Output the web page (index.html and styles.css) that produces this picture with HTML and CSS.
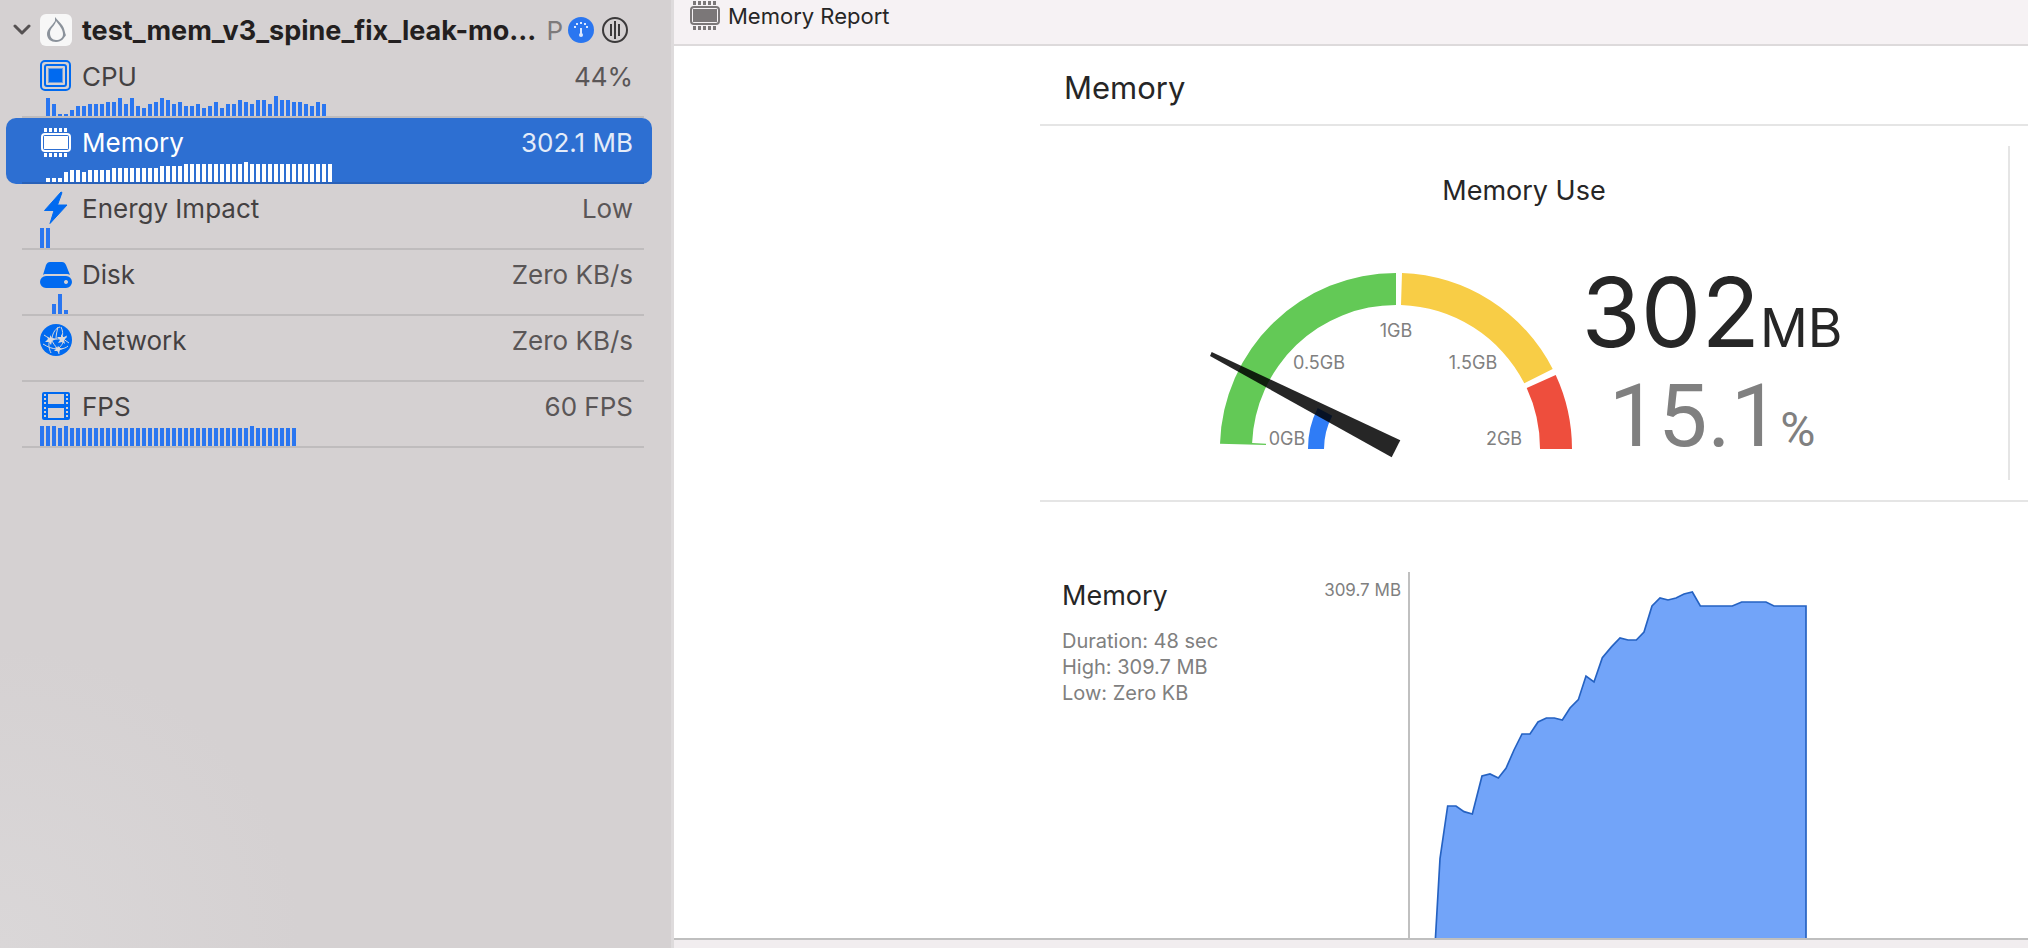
FILE: index.html
```html
<!DOCTYPE html>
<html lang="en">
<head>
<meta charset="utf-8">
<title>Memory Report</title>
<link rel="stylesheet" href="styles.css">
</head>
<body>
<svg class="defs" width="0" height="0" aria-hidden="true">
  <symbol id="chip" viewBox="0 0 32 32" overflow="visible">
    <rect x="2" y="6" width="28" height="17" rx="3" fill="none" stroke="currentColor" stroke-width="2"/>
    <rect x="4" y="8" width="24" height="13" fill="currentColor"/>
    <path d="M5.500 0v4M10.500 0v4M15.500 0v4M20.500 0v4M25.500 0v4M5.500 25v4M10.500 25v4M15.500 25v4M20.500 25v4M25.500 25v4" stroke="currentColor" stroke-width="3"/>
  </symbol>
</svg>
<div class="app">
  <aside class="sidebar">
    <header class="process">
      <button class="disclosure" aria-label="Collapse">
        <svg width="18" height="12" viewBox="0 0 18 12"><path d="M2 2l7 7 7-7" fill="none" stroke="#555152" stroke-width="3" stroke-linecap="round" stroke-linejoin="round"/></svg>
      </button>
      <svg class="app-icon" width="32" height="32" viewBox="0 0 32 32">
        <rect width="32" height="32" rx="6" fill="#f7f7f7"/>
        <path fill-rule="evenodd" d="M15 3L15 7C12 12 7 15 7 20c0 5 4 8 9 8 6 0 8-4 10-7-1-1-1-6-4-10C20 8 17 6 15 3zM16 7c3 4 7 8 7 13 0 4-3 6-7 6s-6-3-6-7c0-5 5-7 6-12z" fill="#8b929b"/>
      </svg>
      <h1 class="process-name">test_mem_v3_spine_fix_leak-mo...</h1>
      <span class="pid">P</span>
      <button class="round" aria-label="Gauges">
        <svg width="26" height="26" viewBox="0 0 26 26"><circle cx="13" cy="13" r="13" fill="#2a76f0"/><path d="M13 11v8" stroke="#dbe8ff" stroke-width="2"/><circle cx="13" cy="18" r="2" fill="#dbe8ff"/><path d="M6 10h2M8 7h2M12 6h2M16 7h2M18 10h2" stroke="#dbe8ff" stroke-width="2"/></svg>
      </button>
      <button class="round" aria-label="Threads">
        <svg width="26" height="26" viewBox="0 0 26 26"><circle cx="13" cy="13" r="12" fill="none" stroke="#3c3a3b" stroke-width="2"/><path d="M9 7v12M13 4v18M17 7v12" stroke="#3c3a3b" stroke-width="2"/></svg>
      </button>
    </header>
    <nav class="gauges">
      <button class="row"><span class="cell">
        <span class="line">
          <svg class="icon" viewBox="0 -1 32 32"><rect x="1" y="0" width="29" height="29" rx="4" fill="none" stroke="currentColor" stroke-width="2"/><rect x="5" y="4" width="21" height="21" rx="2" fill="none" stroke="currentColor" stroke-width="2"/><rect x="9" y="8" width="13" height="13" fill="currentColor"/><rect x="8.500" y="7.500" width="14" height="14" fill="none" stroke="currentColor" stroke-dasharray="1 1"/></svg>
          <span class="name">CPU</span><span class="value">44%</span>
        </span>
        <svg class="spark" width="300" height="20"><path d="M8 20v-18M14 20v-12M20 20v-2M26 20v-2M32 20v-6M38 20v-10M44 20v-10M50 20v-12M56 20v-12M62 20v-12M68 20v-14M74 20v-14M80 20v-18M86 20v-12M92 20v-18M98 20v-10M104 20v-8M110 20v-12M116 20v-14M122 20v-18M128 20v-16M134 20v-12M140 20v-14M146 20v-10M152 20v-10M158 20v-12M164 20v-8M170 20v-10M176 20v-14M182 20v-8M188 20v-12M194 20v-12M200 20v-16M206 20v-14M212 20v-12M218 20v-16M224 20v-16M230 20v-12M236 20v-20M242 20v-16M248 20v-16M254 20v-14M260 20v-14M266 20v-12M272 20v-10M278 20v-14M284 20v-12" stroke-width="4"/></svg>
      </span></button>
      <button class="row selected" aria-current="true"><span class="cell">
        <span class="line">
          <svg class="icon" viewBox="0 -2 32 32"><use href="#chip" width="32" height="32"/></svg>
          <span class="name">Memory</span><span class="value">302.1 MB</span>
        </span>
        <svg class="spark" width="300" height="20" stroke-dasharray="4 2"><path d="M6 18h16" stroke-width="4"/><path d="M24 15h4M42 15h4" stroke-width="10"/><path d="M30 14h10M48 14h22" stroke-width="12"/><path d="M72 13h46" stroke-width="14"/><path d="M120 12h22" stroke-width="16"/><path d="M144 11h148" stroke-width="18"/><path d="M204 10h4" stroke-width="20"/></svg>
      </span></button>
      <button class="row"><span class="cell">
        <span class="line">
          <svg class="icon" viewBox="0 -1 32 32"><path d="M21 -1L4.500 17.500H14L10 30.500L27 12H17.500L22 -.5z" fill="currentColor" stroke="currentColor" stroke-linejoin="round"/></svg>
          <span class="name">Energy Impact</span><span class="value">Low</span>
        </span>
        <svg class="spark" width="300" height="20" stroke-dasharray="4 2"><path d="M0 10h10" stroke-width="20"/></svg>
      </span></button>
      <button class="row"><span class="cell">
        <span class="line">
          <svg class="icon" viewBox="0 -1 32 32"><path d="M3 16L6 6c1-2 2-3 4-3h12c2 0 3 1 4 3l4 10c-1-.7-2-1-4-1H6c-2 0-2 .3-3 1z" fill="currentColor"/><path fill-rule="evenodd" d="M6 17h20a6 6 0 0 1 0 12H6a6 6 0 0 1 0-12zM26 21a2 2 0 1 0 .01 0z" fill="currentColor"/></svg>
          <span class="name">Disk</span><span class="value">Zero KB/s</span>
        </span>
        <svg class="spark" width="300" height="20"><path d="M14 20v-10M20 20v-20M26 20v-4" stroke-width="4"/></svg>
      </span></button>
      <button class="row"><span class="cell">
        <span class="line">
          <svg class="icon" viewBox="0 -1 32 32"><circle cx="16" cy="15" r="16" fill="currentColor"/><g fill="none" stroke="#dcd9da" stroke-width="1"><path d="M12 13C13 7 16 3 20 2M18 2c-1 4-2 8-2 12M21 2c2 4 2 7 1 12M4 10c3 2 6 4 8 4s8 1 15-3M3 19c5 3 9 5 15 5 5 0 8-1 10-3M10 14c-2 5-1 10 1 14M23 14c1 4-2 7-5 10M11 14c2 4 4 7 7 10M22 13l7 5M18 24l1 5"/></g><g fill="#dcd9da"><path d="M10 10l2 3 4 1-4 2-1 4-2-3-4 0 3-3-1-2 3 1zM21 9l2 3 4 0-3 3 1 4-3-2-4 1 2-3-3-3 4 0zM18 21l2 2 3 1-3 1-1 3-2-2-3 0 2-2-1-2 2 1z"/></g></svg>
          <span class="name">Network</span><span class="value">Zero KB/s</span>
        </span>
        <svg class="spark" width="300" height="20"></svg>
      </span></button>
      <button class="row"><span class="cell">
        <span class="line">
          <svg class="icon" viewBox="0 -1 32 32"><path fill-rule="evenodd" d="M4 1h24q2 0 2 2v24q0 2-2 2H4q-2 0-2-2V3q0-2 2-2zM8 3v10h16V3zM8 17v10h16V17zM4 3v2h2V3zM4 7v2h2V7zM4 11v2h2v-2zM4 16v2h2v-2zM4 20v2h2v-2zM4 24v2h2v-2zM26 3v2h2V3zM26 7v2h2V7zM26 11v2h2v-2zM26 16v2h2v-2zM26 20v2h2v-2zM26 24v2h2v-2z" fill="currentColor"/></svg>
          <span class="name">FPS</span><span class="value">60 FPS</span>
        </span>
        <svg class="spark" width="300" height="20" stroke-dasharray="4 2"><path d="M0 11h256" stroke-width="18"/><path d="M0 10h16M24 10h4M210 10h4" stroke-width="20"/></svg>
      </span></button>
    </nav>
  </aside>

  <main class="main">
    <div class="path-bar">
      <svg class="icon" viewBox="0 -1 32 32"><use href="#chip" width="32" height="32"/></svg>
      <span>Memory Report</span>
    </div>
    <div class="report">
      <h2 class="report-title">Memory</h2>
      <section class="overview">
        <div class="card">
          <h3 class="card-title">Memory Use</h3>
          <div class="usage">
            <svg class="dial" width="362" height="186" viewBox="-186 -177 362 186">
              <path fill="#63c956" d="M-176 -5.300A176 176 0 0 1 0 -176V-144A144 144 0 0 0 -143.900 -6L-130 -5.200V-4z"/>
              <path fill="#f8cd46" d="M6 -176A176 176 0 0 1 156.700 -80L128.300 -65.700A144 144 0 0 0 5 -144z"/>
              <path fill="#ee4e3d" d="M159.700 -74A176 176 0 0 1 176 0H144A144 144 0 0 0 130.700 -61z"/>
              <path fill="#2f7cf6" d="M-88 0A88 88 0 0 1 -78.300 -41L-63.700 -33.300A72 72 0 0 0 -72 0z"/>
              <g class="dial-labels">
                <text x="-109" y="-4">0GB</text>
                <text x="-77" y="-80">0.5GB</text>
                <text x="0" y="-112">1GB</text>
                <text x="77" y="-80">1.5GB</text>
                <text x="108" y="-4">2GB</text>
              </g>
              <path fill="#000" fill-opacity=".85" d="M-184.300 -97L-186 -93L-4.300 8.300L4.300 -8.700z"/>
            </svg>
            <div class="figures">
              <div class="amount">302<span class="unit">MB</span></div>
              <div class="percent">15.1<span class="unit">%</span></div>
            </div>
          </div>
        </div>
      </section>
      <section class="history">
        <div class="legend">
          <div>
            <h3 class="history-title">Memory</h3>
            <p class="details">Duration: 48 sec<br>High: 309.7 MB<br>Low: Zero KB</p>
          </div>
          <span class="axis-label">309.7 MB</span>
        </div>
        <div class="plot">
          <svg width="430" height="366" viewBox="-30 36 1290 1098">
            <path fill="#72a4f9" stroke="#2562c2" stroke-width="5" d="M46 1140L60 896L83 738H108L132 755L157 762L186 648L210 642L235 654L258 625L282 570L306 522H330L354 486L379 474H403L427 480L450 444L475 419L498 348L522 366L547 293L575 260L600 234L624 240H649L672 216L696 138L720 114L744 120L768 114L792 102L817 96L841 138H937L965 126H1038L1062 138H1158V1140"/>
          </svg>
        </div>
      </section>
    </div>
    <footer class="status"></footer>
  </main>
</div>
</body>
</html>
```
FILE: styles.css
```css
* { box-sizing: border-box; }
body {
  margin: 0;
  font-family: Inter, "Liberation Sans", sans-serif;
  color: #262626;
  background: #fff;
}
h1, h2, h3, p { margin: 0; font-weight: 400; }
button {
  margin: 0;
  padding: 0;
  border: 0;
  background: none;
  font: inherit;
  color: inherit;
  text-align: left;
}
svg { display: block; flex: none; }
.defs { position: absolute; }
.app { display: flex; min-height: 100vh; }

.sidebar {
  flex: 0 0 674px;
  padding-right: 19px;
  background: radial-gradient(circle at 0 100%, #dad7d8, #d5d1d2 300px);
  border-right: 3px solid #dedbdc;
  font-size: 26px;
}
.process {
  display: flex;
  align-items: center;
  height: 52px;
  padding: 8px 24px 0 13px;
}
.app-icon { margin: 0 10px 0 9px; }
.process-name {
  flex: 1;
  min-width: 0;
  font-size: 27px;
  font-weight: 700;
  white-space: nowrap;
  color: #231f20;
}
.pid { color: #7d7a7b; }
.round { margin-left: 8px; }
.pid + .round { margin-left: 5px; }
.gauges { display: flex; flex-direction: column; padding-left: 6px; }
.row {
  padding: 0 8px 0 16px;
  border-radius: 10px;
  color: #444142;
}
.cell {
  display: flex;
  flex-direction: column;
  padding: 0 11px 0 18px;
  border-bottom: 2px solid #bfbcbd;
}
.line {
  display: flex;
  align-items: center;
  gap: 10px;
  height: 44px;
  padding-top: 4px;
}
.icon { width: 32px; height: 32px; overflow: visible; color: #006af0; }
.name { flex: 1; }
.value { color: #5a5657; }
.spark { stroke: #2a76f0; fill: none; }
.selected { background: #2d6fd2; color: #fff; }
.selected .cell { border-color: #2961b8; }
.selected .icon { color: #fff; }
.selected .value { color: #e4ecf9; }
.selected .spark { stroke: #fff; }

.main {
  flex: 1;
  min-width: 0;
  display: flex;
  flex-direction: column;
  overflow: hidden;
}
.path-bar {
  display: flex;
  align-items: center;
  gap: 7px;
  height: 46px;
  padding: 0 15px 12px;
  border-bottom: 2px solid #dddadb;
  background: #f6f2f4;
  font-size: 22px;
}
.path-bar .icon { color: #7b7778; }
.report {
  flex: 1;
  display: flex;
  flex-direction: column;
  padding-left: 366px;
}
.report-title {
  padding: 22px 24px 16px;
  border-bottom: 2px solid #e5e5e5;
  font-size: 31px;
  line-height: 40px;
}
.overview {
  padding: 20px 18px 20px 0;
  border-bottom: 2px solid #e5e5e5;
}
.card {
  min-height: 334px;
  padding-top: 28px;
  border-right: 2px solid #e5e5e5;
}
.card-title {
  font-size: 27px;
  line-height: 34px;
  text-align: center;
}
.usage {
  display: flex;
  justify-content: center;
  gap: 10px;
  padding: 54px 0 0 4px;
}
.dial { margin-top: 10px; }
.dial-labels { font-size: 18px; fill: #808080; text-anchor: middle; }
.figures {
  text-align: center;
  line-height: 100px;
  white-space: nowrap;
}
.unit { line-height: 1; }
.amount { font-size: 96px; }
.amount .unit { font-size: 53px; }
.percent {
  padding-top: 4px;
  font-family: Roboto, Inter, sans-serif;
  font-size: 88px;
  color: #808080;
}
.percent .unit { font-size: 48px; }
.history { flex: 1; display: flex; padding-top: 70px; }
.legend {
  display: flex;
  justify-content: space-between;
  width: 368px;
  padding: 7px 7px 0 22px;
}
.history-title { font-size: 27px; line-height: 34px; }
.details {
  margin-top: 15px;
  font-size: 20px;
  line-height: 26px;
  color: #808080;
}
.axis-label { font-size: 17px; line-height: 22px; color: #808080; }
.plot {
  display: flex;
  align-items: flex-end;
  border-left: 2px solid #c0c0c0;
}
.status {
  height: 10px;
  border-top: 2px solid #bfbfbf;
  background: #f1edef;
}
```
